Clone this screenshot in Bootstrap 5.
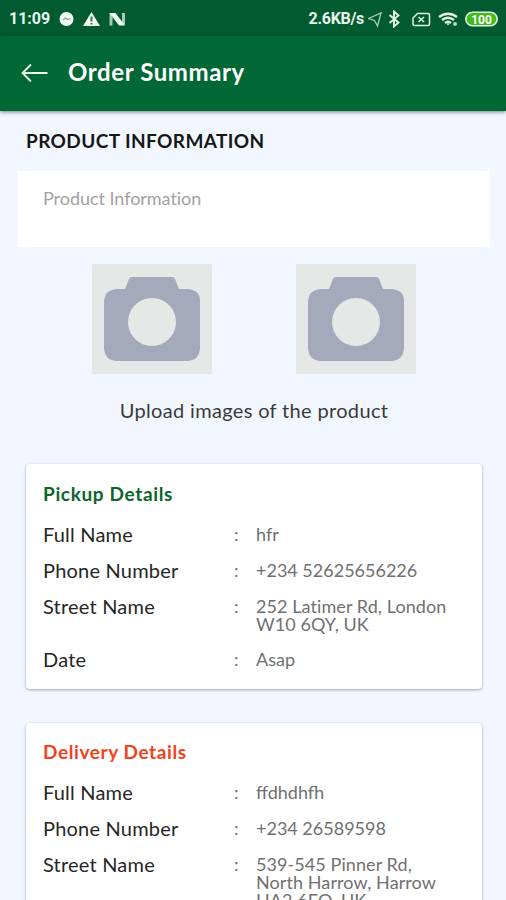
<!DOCTYPE html>
<html lang="en">
<head>
<meta charset="utf-8">
<meta name="viewport" content="width=device-width, initial-scale=1">
<title>Order Summary</title>
<link href="https://cdn.jsdelivr.net/npm/bootstrap@5.3.0/dist/css/bootstrap.min.css" rel="stylesheet">
<style>
body{font-family:Lato,"Open Sans",sans-serif;background:#f2f6ff;height:900px;overflow:hidden;color:#222}
main{height:789px;overflow:hidden}
svg{display:block;flex:none}
.status-bar{height:36px;background:#005c30;color:#e9f5ec;font:500 16px/36px Roboto,sans-serif;padding:1px 8px 0 9px}
.clock{font-weight:700}
.rate{font-weight:700;letter-spacing:-.3px}
.app-bar{height:75px;background:#006835;box-shadow:0 1px 4px rgba(0,0,0,.5);padding:0 0 1px 21px;position:relative}
.app-title{font-size:24px;font-weight:700;line-height:28px;color:#fff;margin:-2px 0 0 20px;letter-spacing:.6px}
.section-title{font-size:19px;font-weight:700;line-height:24px;color:#161616;margin:0 0 0 26px;padding-top:18px;letter-spacing:.4px}
.info-field{height:76px;margin:18px 16px 0 18px;padding:15px 25px;background:#fff;border:0;border-radius:0;font-size:18px;line-height:24px;resize:none;display:block;width:auto;letter-spacing:-.04px}
.info-field::placeholder{color:#a2a2a2;opacity:1}
.uploads{gap:84px;margin-top:17px;padding-left:2px}
.upload-note{font-size:20px;line-height:24px;margin-top:24px;padding-left:2px;color:#3a3a3a;letter-spacing:.34px}
.detail-card{margin:0 24px 0 26px;background:#fff;border:0;border-radius:4px;box-shadow:0 1px 3px rgba(40,45,65,.4);padding:18px 17px 0 17px}
.card-pickup{height:225px;margin-top:42px}
.card-delivery{height:225px;margin-top:34px}
.detail-title{font-size:19px;font-weight:700;line-height:24px;margin:0 0 19px;letter-spacing:.65px}
.pickup-title{color:#0b6429}
.delivery-title{color:#f4401c;letter-spacing:.6px;margin-top:-1px}
.detail-list{display:grid;grid-template-columns:191px 22px 1fr;row-gap:18px;line-height:18px;margin:0}
.detail-list dt{font-size:20px;font-weight:400;color:#262626;letter-spacing:.2px}
.detail-list dd{font-size:18px;color:#707070;margin:0}
.detail-list .address{letter-spacing:.08px;margin-bottom:-1px}
</style>
<script src="https://cdn.jsdelivr.net/npm/bootstrap@5.3.0/dist/js/bootstrap.bundle.min.js"></script>
</head>
<body>
<header>
<div class="status-bar d-flex align-items-center">
<span class="clock">11:09</span>
<svg class="ms-2" width="68" height="16" viewBox="0 0 68 16" fill="#f2faf3">
<circle cx="8.500" cy="8" r="7"/><path d="M5 9l2.500-2 2 1.500 3-1" stroke="#7fa88d" stroke-width="1.300" fill="none"/>
<path d="M33.500 1L42 15H25z"/><path d="M33.500 5.500v5M33.500 12v1.500" stroke="#3f7d58" stroke-width="2.200"/>
<path d="M51.500 2L54.500 4V14.500H51.500zM64 2H67V14L64 12z" opacity=".7"/><path d="M51.500 2H57.500L67 14.500H61z"/>
</svg>
<span class="ms-auto rate">2.6KB/s</span>
<svg class="ms-1" width="130" height="18" viewBox="4 0 130 18" fill="none" stroke="#e6f3e8">
<path d="M4.500 8.500L17 3L13.500 16L10.500 10.500z" stroke-width="1.300" opacity=".75"/>
<path d="M25.500 5L34.500 12.500L30 16.500V1.500L34.500 5.500L25.500 13" stroke-width="1.900"/>
<path d="M53.500 3.500H64Q65.500 3.500 65.500 5V14Q65.500 15.500 64 15.500H50.500Q49 15.500 49 14V8z" stroke-width="1.500"/><path d="M54.500 7L60 12M60 7L54.500 12" stroke-width="1.600"/>
<path d="M75 7Q84 .5 93 7M78 10Q84 5.500 90 10M81 13Q84 10.500 87 13" stroke-width="2.300"/><path d="M82.500 13.500H85.500L84 15.500z" fill="#e6f3e8" stroke="none"/><circle cx="91" cy="14" r="2" fill="#b8d2c0" stroke="none"/>
<rect x="101.800" y="2.300" width="31.400" height="13.400" rx="6.700" stroke-width="1.600" fill="#43bb16"/>
<text x="117.500" y="13.500" text-anchor="middle" font-family="Roboto,sans-serif" font-size="12" font-weight="700" fill="#fff" stroke="none">100</text>
</svg>
</div>
<nav class="app-bar d-flex align-items-center">
<svg width="27" height="20" viewBox="0 0 27 20" fill="none" stroke="#edf8ef" stroke-width="1.800"><path d="M26.500 10H1.500M10 1.500L1.500 10L10 18.500"/></svg>
<h1 class="app-title">Order Summary</h1>
</nav>
</header>
<main>
<h2 class="section-title">PRODUCT INFORMATION</h2>
<div class="d-grid"><textarea class="info-field" placeholder="Product Information" aria-label="Product Information"></textarea></div>
<div class="uploads d-flex justify-content-center">
<svg width="120" height="110" viewBox="0 0 120 110"><path fill="#e6e7e7" d="M0 0H120V110H0z"/><path fill="#a4a9bb" d="M24 25H33L37 15Q38 13 40 13H80Q82 13 83 15L87 25H96Q108 26 108 37V85Q107 96 96 97H24Q13 96 12 85V37Q13 26 24 25z"/><circle cx="60" cy="58" r="24" fill="#e6e7e7"/></svg>
<svg width="120" height="110" viewBox="0 0 120 110"><path fill="#e6e7e7" d="M0 0H120V110H0z"/><path fill="#a4a9bb" d="M24 25H33L37 15Q38 13 40 13H80Q82 13 83 15L87 25H96Q108 26 108 37V85Q107 96 96 97H24Q13 96 12 85V37Q13 26 24 25z"/><circle cx="60" cy="58" r="24" fill="#e6e7e7"/></svg>
</div>
<p class="upload-note text-center mb-0">Upload images of the product</p>
<section class="card detail-card card-pickup">
<h3 class="detail-title pickup-title">Pickup Details</h3>
<dl class="detail-list">
<dt>Full Name</dt><dd>:</dd><dd>hfr</dd>
<dt>Phone Number</dt><dd>:</dd><dd>+234 52625656226</dd>
<dt>Street Name</dt><dd>:</dd><dd class="address">252 Latimer Rd, London<br>W10 6QY, UK</dd>
<dt>Date</dt><dd>:</dd><dd>Asap</dd>
</dl>
</section>
<section class="card detail-card card-delivery">
<h3 class="detail-title delivery-title">Delivery Details</h3>
<dl class="detail-list">
<dt>Full Name</dt><dd>:</dd><dd>ffdhdhfh</dd>
<dt>Phone Number</dt><dd>:</dd><dd>+234 26589598</dd>
<dt>Street Name</dt><dd>:</dd><dd class="address">539-545 Pinner Rd,<br>North Harrow, Harrow<br>HA2 6EQ, UK</dd>
</dl>
</section>
</main>
</body>
</html>
